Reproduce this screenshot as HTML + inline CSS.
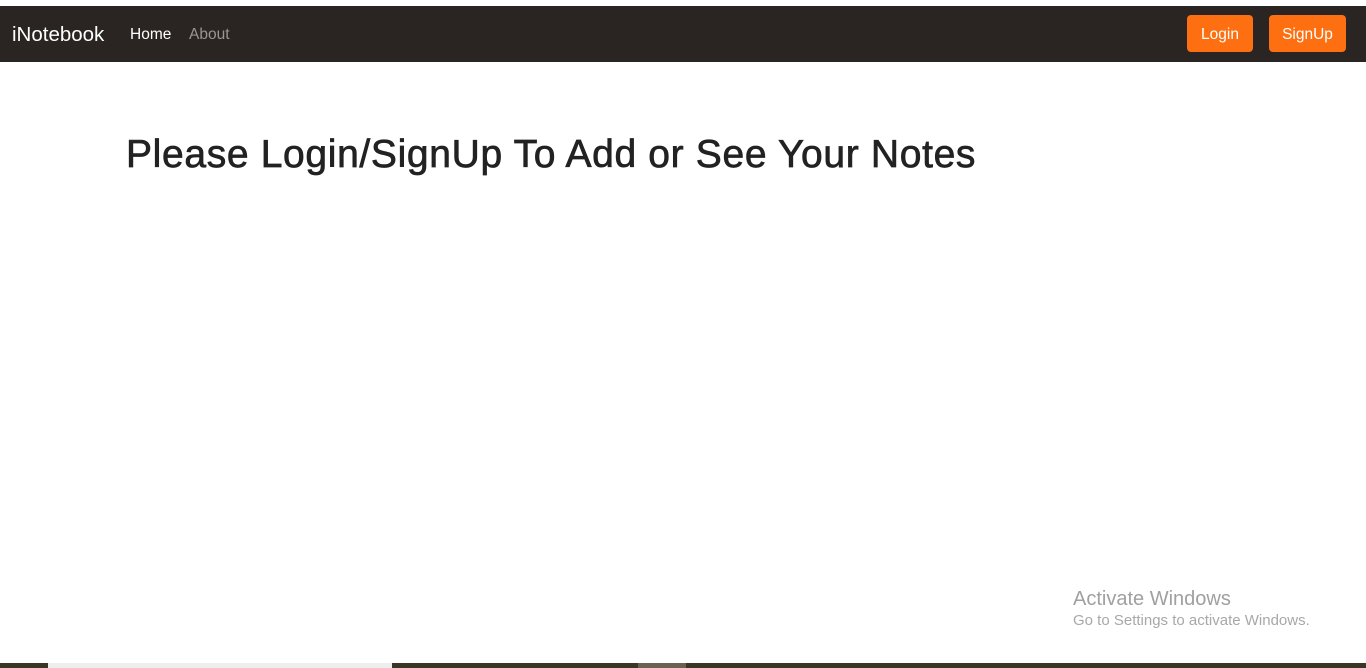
<!DOCTYPE html>
<html><head><meta charset="utf-8"><style>
body{margin:0;width:1366px;height:668px;background:#fff;position:relative;overflow:hidden;font-family:"Liberation Sans",sans-serif}
.nav{position:absolute;top:6px;left:0;width:1366px;height:56px;background:#2a2522}
.brand{position:absolute;left:12px;top:17px;color:#fff;font-size:20.5px}
.l{position:absolute;top:20px;font-size:15.5px}
.btn{position:absolute;top:9px;height:37px;background:#fd6f10;color:#fff;border-radius:4px;font-size:15.5px;line-height:40px;text-align:center}
h1{position:absolute;left:126px;top:133px;margin:0;font-size:39px;font-weight:normal;color:#222;letter-spacing:0.66px;-webkit-text-stroke:0.7px #222}
.aw{position:absolute;left:1073px;top:588px;color:#a0a0a0;font-size:20px}
.aw2{position:absolute;left:1073px;top:612px;color:#a8a8a8;font-size:15px}
.bot{position:absolute;left:0;top:663px;width:1366px;height:5px;background:#3b3527}
</style></head><body>
<div class="nav">
<div class="brand">iNotebook</div>
<div class="l" style="left:130px;color:#fff">Home</div>
<div class="l" style="left:189px;color:#9a9591">About</div>
<div class="btn" style="left:1187px;width:66px">Login</div>
<div class="btn" style="left:1269px;width:77px">SignUp</div>
</div>
<h1>Please Login/SignUp To Add or See Your Notes</h1>
<div class="aw">Activate Windows</div>
<div class="aw2">Go to Settings to activate Windows.</div>
<div class="bot"><div style="position:absolute;left:48px;width:344px;height:5px;background:#eee"></div><div style="position:absolute;left:638px;width:48px;height:5px;background:#6a6250"></div></div>
</body></html>
